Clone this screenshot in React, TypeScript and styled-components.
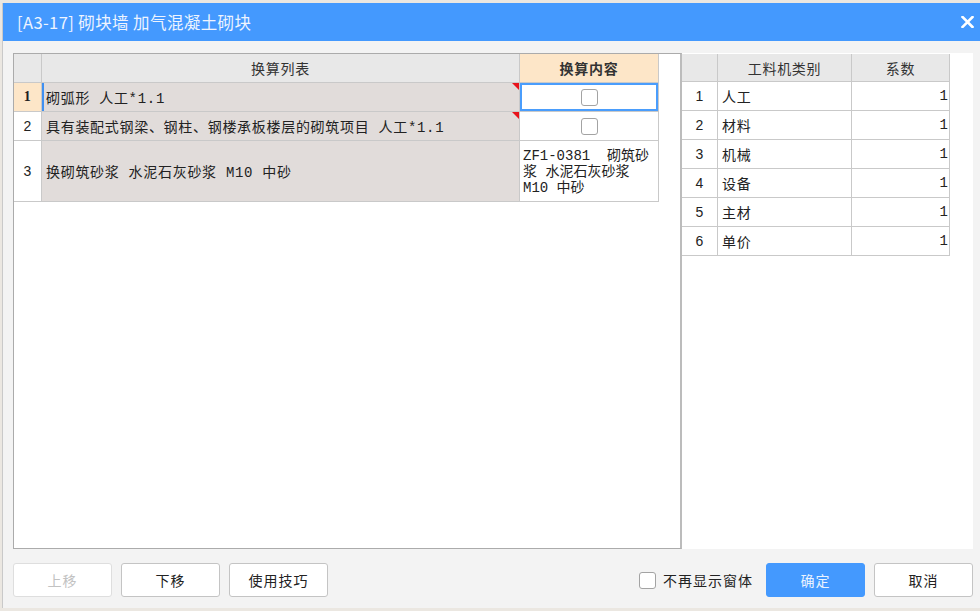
import React from "react"
import { createGlobalStyle, styled } from "styled-components"

const GlobalStyle = createGlobalStyle`
    html, body {
        margin: 0;
        padding: 0;
        background: #ebe7e1;
        overflow: hidden;
    }
    * {
        box-sizing: border-box;
    }
`

const Page = styled.div`
    width: 980px;
    height: 611px;
    padding: 3px 0 0 2px;
    overflow: hidden;
`

const Dialog = styled.div`
    width: 990px;
    height: 605px;
    display: flex;
    flex-direction: column;
    background: #f3f3f3;
    border-left: 1px solid #c9c9c9;
    font-family: "Noto Sans CJK SC", "Liberation Sans", sans-serif;
`

const TitleBar = styled.div`
    height: 38px;
    flex: none;
    display: flex;
    align-items: center;
    justify-content: space-between;
    padding: 0 0 0 14px;
    width: 979px;
    background: #4499fe;
`

const Title = styled.div`
    color: #eef4ff;
    font-size: 16.5px;
    letter-spacing: 0.4px;
`

const Close = styled.div`
    width: 30px;
    height: 28px;
    display: flex;
    align-items: center;
    justify-content: center;
`

const Body = styled.div`
    padding: 12px 0 0 10px;
    display: flex;
    flex-direction: column;
`

const Panels = styled.div`
    display: flex;
    width: 960px;
    height: 496px;
`

const LeftPanel = styled.div`
    width: 669px;
    height: 100%;
    background: #fff;
    border: 1px solid #ababab;
    border-right: 2px solid #bcbcbc;
`

const RightPanel = styled.div`
    width: 291px;
    height: 100%;
    background: #fff;
    padding-top: 1px;
`

const Grid = styled.div<{ $cols: string; $rows: string }>`
    display: grid;
    grid-template-columns: ${(p) => p.$cols};
    grid-template-rows: ${(p) => p.$rows};
    font-family: "Liberation Mono", "Noto Sans CJK SC", monospace;
    font-size: 14px;
    color: #222;
`

const Cell = styled.div<{
    $bg?: string
    $align?: "left" | "center" | "right"
    $bold?: boolean
    $sans?: boolean
}>`
    position: relative;
    display: flex;
    align-items: center;
    justify-content: ${(p) => (p.$align === "center" ? "center" : p.$align === "right" ? "flex-end" : "flex-start")};
    padding: ${(p) => (p.$align === "right" ? "0 1px 0 4px" : "0 4px")};
    background: ${(p) => p.$bg || "#fff"};
    border-right: 1px solid #c9c9c9;
    border-bottom: 1px solid #c9c9c9;
    font-weight: ${(p) => (p.$bold ? 700 : 400)};
    font-family: ${(p) => (p.$sans ? `"Liberation Sans", "Noto Sans CJK SC", sans-serif` : "inherit")};
    font-size: 14px;
    letter-spacing: ${(p) => (p.$sans || p.$align === "right" ? "0" : "0.7px")};
    white-space: nowrap;
    overflow: hidden;
`

const HeadCell = styled(Cell)`
    font-family: "Noto Sans CJK SC", sans-serif;
    color: #333;
`

const DataCell = styled(Cell)<{ $mark?: boolean; $selected?: boolean; $focus?: boolean }>`
    box-shadow: ${(p) =>
        p.$focus ? "inset 0 0 0 2px #4a9dfc" : p.$selected ? "inset 2px 0 0 #3f90f2" : "none"};
    &::after {
        content: "";
        display: ${(p) => (p.$mark ? "block" : "none")};
        position: absolute;
        top: 0;
        right: 0;
        border-top: 7px solid #e8141c;
        border-left: 7px solid transparent;
    }
`

const MultiText = styled.div`
    line-height: 16px;
    font-size: 14px;
    letter-spacing: 0;
    padding-top: 1px;
    margin-left: -1px;
`

const CheckBox = styled.div<{ $size?: number }>`
    width: ${(p) => p.$size || 17}px;
    height: ${(p) => p.$size || 17}px;
    border: 1px solid #a3a3a3;
    border-radius: 3px;
    background: #fff;
`

const Footer = styled.div`
    width: 960px;
    margin-top: 14px;
    display: flex;
    align-items: center;
    gap: 9px;
`

const Button = styled.button<{ $primary?: boolean; $disabled?: boolean }>`
    width: 99px;
    height: 34px;
    border-radius: 3px;
    border: 1px solid ${(p) => (p.$primary ? "#4499fe" : p.$disabled ? "#dedede" : "#c4c4c4")};
    background: ${(p) => (p.$primary ? "#4499fe" : "#fff")};
    color: ${(p) => (p.$primary ? "#eaf3ff" : p.$disabled ? "#c2c2c2" : "#222")};
    font-family: "Noto Sans CJK SC", sans-serif;
    font-size: 14px;
    letter-spacing: 1px;
    padding: 0;
    cursor: pointer;
`

const Spacer = styled.div`
    flex: 1;
`

const CheckLabel = styled.label`
    display: flex;
    align-items: center;
    gap: 7px;
    margin-right: 4px;
    font-size: 14px;
    letter-spacing: 1px;
    color: #222;
`

const rightRows = ["人工", "材料", "机械", "设备", "主材", "单价"]

export default function App() {
    return (
        <>
            <GlobalStyle />
            <Page>
                <Dialog>
                    <TitleBar>
                        <Title>[A3-17] 砌块墙 加气混凝土砌块</Title>
                        <Close>
                            <svg width="13" height="12" viewBox="0 0 13 12">
                                <path d="M1.5 1 L11.5 11 M11.5 1 L1.5 11" stroke="#fff" strokeWidth="2.6" strokeLinecap="square" />
                            </svg>
                        </Close>
                    </TitleBar>
                    <Body>
                        <Panels>
                            <LeftPanel>
                                <Grid $cols="28px 478px 139px" $rows="29px 29px 29px 61px">
                                    <HeadCell $bg="#e8e8e8" />
                                    <HeadCell $bg="#e8e8e8" $align="center">换算列表</HeadCell>
                                    <HeadCell $bg="#fde6c8" $align="center" $bold>换算内容</HeadCell>

                                    <Cell $bg="#fde6c8" $align="center" $bold style={{ fontFamily: '"Liberation Serif", serif' }}>1</Cell>
                                    <DataCell $bg="#e1dcda" $mark $selected>砌弧形 人工*1.1</DataCell>
                                    <DataCell $align="center" $focus><CheckBox /></DataCell>

                                    <Cell $align="center" $sans>2</Cell>
                                    <DataCell $bg="#e1dcda" $mark>具有装配式钢梁、钢柱、钢楼承板楼层的砌筑项目 人工*1.1</DataCell>
                                    <DataCell $align="center"><CheckBox /></DataCell>

                                    <Cell $align="center" $sans>3</Cell>
                                    <DataCell $bg="#e1dcda">换砌筑砂浆 水泥石灰砂浆 M10 中砂</DataCell>
                                    <DataCell>
                                        <MultiText>
                                            ZF1-0381&nbsp;&nbsp;砌筑砂<br />
                                            浆 水泥石灰砂浆<br />
                                            M10 中砂
                                        </MultiText>
                                    </DataCell>
                                </Grid>
                            </LeftPanel>
                            <RightPanel>
                                <Grid $cols="36px 134px 98px" $rows="28px repeat(6, 29px)">
                                    <HeadCell $bg="#e8e8e8" />
                                    <HeadCell $bg="#e8e8e8" $align="center">工料机类别</HeadCell>
                                    <HeadCell $bg="#e8e8e8" $align="center">系数</HeadCell>
                                    {rightRows.map((name, i) => (
                                        <React.Fragment key={name}>
                                            <Cell $align="center" $sans>{i + 1}</Cell>
                                            <Cell>{name}</Cell>
                                            <Cell $align="right">1</Cell>
                                        </React.Fragment>
                                    ))}
                                </Grid>
                            </RightPanel>
                        </Panels>
                        <Footer>
                            <Button $disabled>上移</Button>
                            <Button>下移</Button>
                            <Button>使用技巧</Button>
                            <Spacer />
                            <CheckLabel>
                                <CheckBox $size={17} />
                                不再显示窗体
                            </CheckLabel>
                            <Button $primary>确定</Button>
                            <Button>取消</Button>
                        </Footer>
                    </Body>
                </Dialog>
            </Page>
        </>
    )
}
